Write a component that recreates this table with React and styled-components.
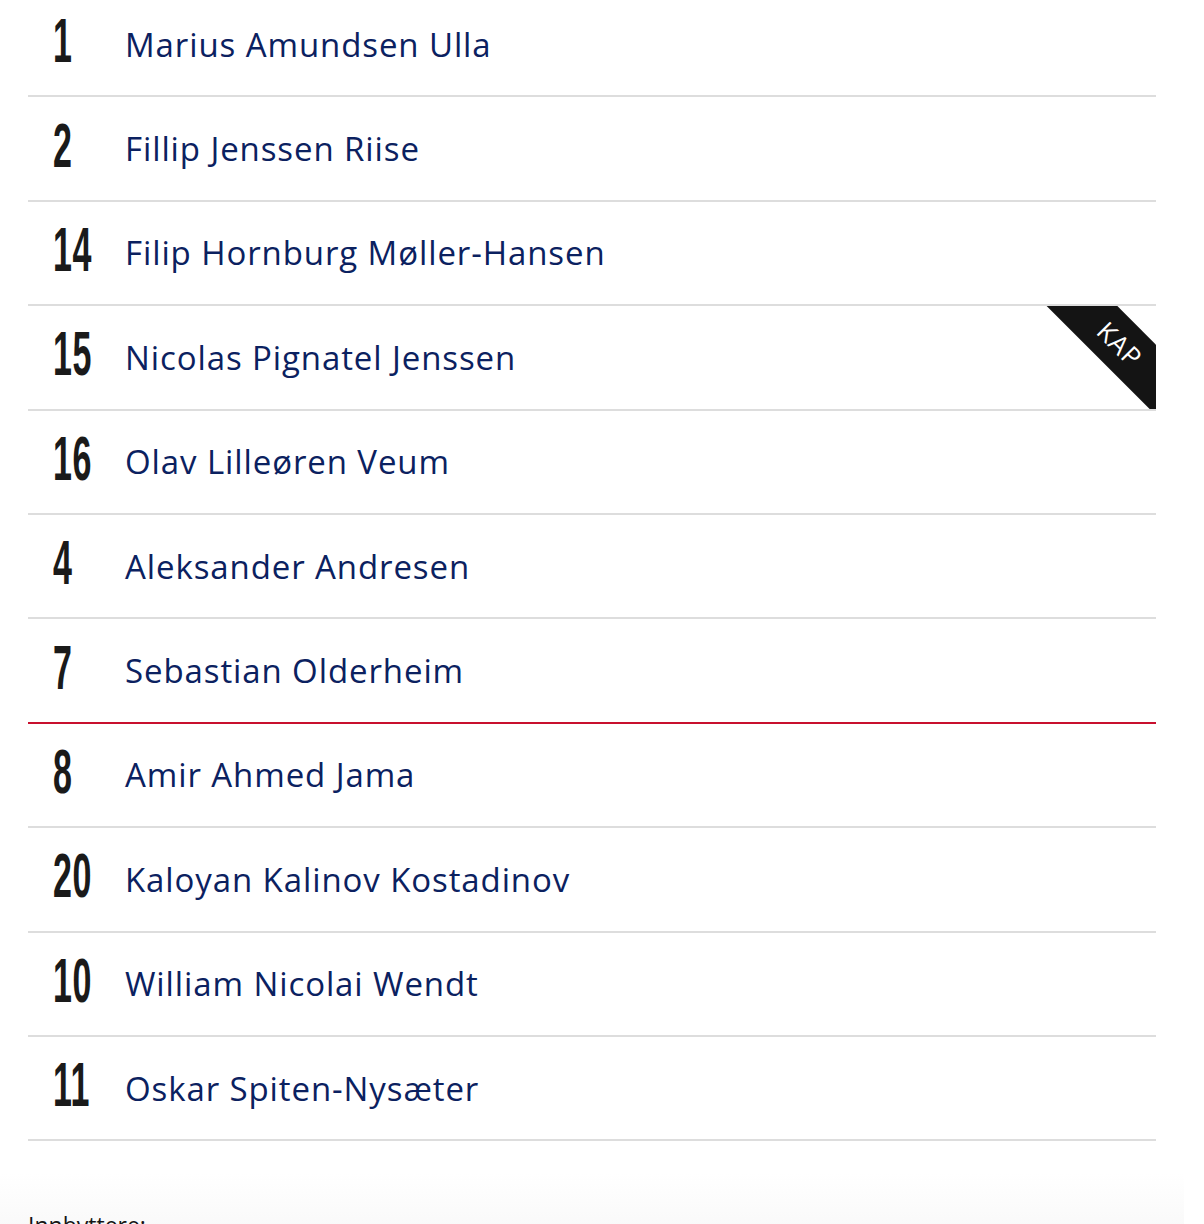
import styled, { createGlobalStyle } from 'styled-components';

const players = [
  { number: 1, name: 'Marius Amundsen Ulla' },
  { number: 2, name: 'Fillip Jenssen Riise' },
  { number: 14, name: 'Filip Hornburg Møller-Hansen' },
  { number: 15, name: 'Nicolas Pignatel Jenssen', captain: true },
  { number: 16, name: 'Olav Lilleøren Veum' },
  { number: 4, name: 'Aleksander Andresen' },
  { number: 7, name: 'Sebastian Olderheim', lineEnd: true },
  { number: 8, name: 'Amir Ahmed Jama' },
  { number: 20, name: 'Kaloyan Kalinov Kostadinov' },
  { number: 10, name: 'William Nicolai Wendt' },
  { number: 11, name: 'Oskar Spiten-Nysæter' },
];

function App() {
  return (
    <>
      <GlobalStyle />
      <Page>
        <List>
          {players.map((p) => (
            <Row key={p.number} $red={p.lineEnd}>
              <Number>
                <Digits>{p.number}</Digits>
              </Number>
              <Name>{p.name}</Name>
              {p.captain && (
                <Ribbon>
                  <span>KAP</span>
                </Ribbon>
              )}
            </Row>
          ))}
        </List>
        <Subs>
          <SubsTitle>Innbyttere:</SubsTitle>
        </Subs>
      </Page>
    </>
  );
}

const GlobalStyle = createGlobalStyle`
  body {
    margin: 0;
    background: #fff;
    font-family: "Open Sans", "Liberation Sans", sans-serif;
    overflow: hidden;
  }
`;

const Page = styled.div`
  margin-top: -7px;
  padding-right: 20px;
`;

const List = styled.ul`
  list-style: none;
  margin: 0 28px;
  padding: 0;
`;

const Row = styled.li`
  position: relative;
  overflow: hidden;
  box-sizing: border-box;
  height: 104.4px;
  display: flex;
  align-items: center;
  padding-left: 25px;
  border-bottom: 2px solid ${(p) => (p.$red ? '#c8102e' : '#dddddd')};
`;

const Number = styled.div`
  width: 72px;
  flex-shrink: 0;
  height: 60px;
  margin-top: -8px;
`;

const Digits = styled.span`
  display: inline-block;
  font-family: "Liberation Sans", Arial, sans-serif;
  font-weight: 700;
  font-size: 63px;
  line-height: 60px;
  color: #1a1a1a;
  transform: scaleX(0.54);
  transform-origin: left center;
  letter-spacing: 1px;
`;

const Name = styled.div`
  font-size: 33px;
  font-weight: 500;
  color: #0b2160;
  letter-spacing: 0.9px;
`;

const Ribbon = styled.div`
  position: absolute;
  top: 13px;
  right: -44px;
  width: 160px;
  height: 50px;
  background: #141414;
  transform: rotate(45deg);
  display: flex;
  align-items: center;
  justify-content: center;

  span {
    color: #fff;
    font-size: 26px;
    font-weight: 500;
    letter-spacing: 1px;
  }
`;

const Subs = styled.section`
  margin-top: 32px;
  padding: 36px 28px 40px;
  background: linear-gradient(to bottom, #ffffff, #f2f2f2 120px);
`;

const SubsTitle = styled.h3`
  margin: 0;
  font-size: 23px;
  font-weight: 400;
  color: #151515;
`;

export default App;
